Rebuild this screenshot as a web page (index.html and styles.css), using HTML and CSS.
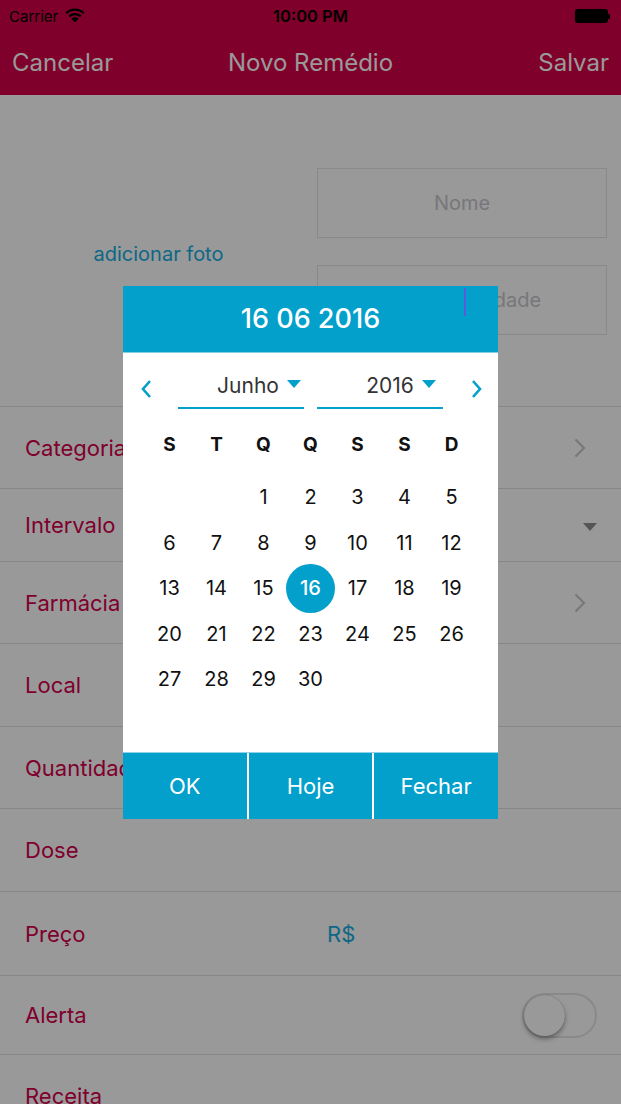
FILE: index.html
```html
<!DOCTYPE html>
<html lang="pt-BR">
<head>
<meta charset="utf-8">
<title>Novo Remédio</title>
<link rel="stylesheet" href="styles.css">
</head>
<body>
<div class="screen">
  <header class="topbar">
    <div class="statusbar">
      <div class="status-left">
        <span class="carrier">Carrier</span>
        <svg class="wifi" width="20" height="15" viewBox="0 0 20 15" aria-hidden="true">
          <path d="M10 14.6 L6.4 10.8 A5.2 5.2 0 0 1 13.6 10.8 Z" fill="#000"/>
          <path d="M4.2 8.4 A8.3 8.3 0 0 1 15.8 8.4" stroke="#000" stroke-width="2.3" fill="none"/>
          <path d="M1.2 5.3 A12.6 12.6 0 0 1 18.8 5.3" stroke="#000" stroke-width="2.3" fill="none"/>
        </svg>
      </div>
      <div class="clock">10:00 PM</div>
      <div class="battery"><span class="battery-body"></span><span class="battery-nub"></span></div>
    </div>
    <nav class="navbar">
      <span class="nav-btn nav-left">Cancelar</span>
      <span class="nav-title">Novo Remédio</span>
      <span class="nav-btn nav-right">Salvar</span>
    </nav>
  </header>

  <main class="form">
    <section class="photo-section">
      <div class="photo"><span class="photo-link">adicionar foto</span></div>
      <div class="fields">
        <div class="field">Nome</div>
        <div class="field">Data de validade<span class="text-caret"></span></div>
      </div>
    </section>
    <ul class="rows">
      <li class="row"><span class="label">Categoria</span>
        <svg class="chevron" width="12" height="20" viewBox="0 0 12 20" aria-hidden="true"><path d="M1.5 1.5 L10 10 L1.5 18.5" stroke="#c8c8cd" stroke-width="2.2" fill="none"/></svg>
      </li>
      <li class="row row-73"><span class="label">Intervalo</span><span class="drop"></span></li>
      <li class="row"><span class="label">Farmácia</span>
        <svg class="chevron" width="12" height="20" viewBox="0 0 12 20" aria-hidden="true"><path d="M1.5 1.5 L10 10 L1.5 18.5" stroke="#c8c8cd" stroke-width="2.2" fill="none"/></svg>
      </li>
      <li class="row row-83"><span class="label">Local</span></li>
      <li class="row"><span class="label">Quantidade</span></li>
      <li class="row row-83"><span class="label">Dose</span></li>
      <li class="row row-84"><span class="label">Preço</span><span class="price">R$</span></li>
      <li class="row row-79"><span class="label">Alerta</span><span class="switch"><span class="knob"></span></span></li>
      <li class="row"><span class="label">Receita</span></li>
    </ul>
  </main>

  <div class="overlay">
    <div class="dialog">
      <div class="dlg-head">16 06 2016</div>
      <div class="dlg-body">
        <div class="month-nav">
          <svg class="arrow arrow-prev" width="12" height="20" viewBox="0 0 12 20" aria-hidden="true"><path d="M10 2 L3 10 L10 18" stroke="#03a0cb" stroke-width="2.6" fill="none"/></svg>
          <div class="select sel-month"><span>Junho</span><span class="tri"></span></div>
          <div class="select sel-year"><span>2016</span><span class="tri"></span></div>
          <svg class="arrow arrow-next" width="12" height="20" viewBox="0 0 12 20" aria-hidden="true"><path d="M2 2 L9 10 L2 18" stroke="#03a0cb" stroke-width="2.6" fill="none"/></svg>
        </div>
        <div class="weekdays">
          <span>S</span><span>T</span><span>Q</span><span>Q</span><span>S</span><span>S</span><span>D</span>
        </div>
        <div class="days">
          <span></span><span></span><span>1</span><span>2</span><span>3</span><span>4</span><span>5</span>
          <span>6</span><span>7</span><span>8</span><span>9</span><span>10</span><span>11</span><span>12</span>
          <span>13</span><span>14</span><span>15</span><span class="sel"><b>16</b></span><span>17</span><span>18</span><span>19</span>
          <span>20</span><span>21</span><span>22</span><span>23</span><span>24</span><span>25</span><span>26</span>
          <span>27</span><span>28</span><span>29</span><span>30</span><span></span><span></span><span></span>
        </div>
      </div>
      <div class="dlg-buttons">
        <span class="dlg-btn">OK</span>
        <span class="dlg-btn">Hoje</span>
        <span class="dlg-btn">Fechar</span>
      </div>
    </div>
  </div>
</div>
</body>
</html>
```

FILE: styles.css
```css
* { box-sizing: border-box; }

html, body {
  margin: 0;
  padding: 0;
}

body {
  font-family: Inter, "Noto Sans", sans-serif;
  background: #fff;
  width: 621px;
  height: 1104px;
  overflow: hidden;
}

.screen {
  width: 621px;
  height: 1104px;
  overflow: hidden;
  position: relative;
  background: #fff;
}

/* ---------- top bar ---------- */
.topbar {
  background: #d40046;
  height: 95px;
  display: flex;
  flex-direction: column;
}

.statusbar {
  height: 32px;
  display: grid;
  grid-template-columns: 1fr auto 1fr;
  align-items: center;
  padding: 0 9px;
  color: #000;
}

.status-left {
  display: flex;
  align-items: center;
  gap: 7px;
}

.carrier {
  font-size: 15px;
}

.wifi { display: block; margin-top: -2px; }

.clock {
  font-size: 16.5px;
  font-weight: 600;
}

.battery {
  justify-self: end;
  display: flex;
  align-items: center;
  margin-right: 2px;
}

.battery-body {
  width: 33px;
  height: 14px;
  background: #000;
  border-radius: 3px;
}

.battery-nub {
  width: 2px;
  height: 5px;
  background: #000;
  border-radius: 0 1px 1px 0;
}

.navbar {
  flex: 1;
  display: grid;
  grid-template-columns: 1fr auto 1fr;
  align-items: center;
  padding: 0 12px 2px;
  color: #fff;
  font-size: 24px;
}

.nav-left { justify-self: start; }
.nav-right { justify-self: end; }

/* ---------- form ---------- */
.photo-section {
  display: flex;
  height: 312px;
  border-bottom: 1px solid #e2e2e2;
}

.photo {
  width: 317px;
  display: flex;
  align-items: center;
  justify-content: center;
  padding-top: 6px;
}

.photo-link {
  color: #14aee0;
  font-size: 20px;
}

.fields {
  width: 290px;
  padding-top: 73px;
  display: flex;
  flex-direction: column;
  gap: 27px;
}

.field {
  position: relative;
  height: 70px;
  border: 1.5px solid #e4e4e4;
  display: flex;
  align-items: center;
  justify-content: center;
  color: #c7c7cd;
  font-size: 20px;
  white-space: nowrap;
}

.text-caret {
  position: absolute;
  left: 146px;
  top: 22px;
  width: 2px;
  height: 28px;
  background: #5b5bdc;
  z-index: 30;
}

.rows {
  list-style: none;
  margin: 0;
  padding: 0;
}

.row {
  height: 82px;
  border-bottom: 1px solid #e2e2e2;
  display: flex;
  align-items: center;
  padding: 0 24px 0 25px;
  position: relative;
}

.row-73 { height: 73px; }
.row-83 { height: 83px; }
.row-84 { height: 84px; }
.row-79 { height: 79px; }

.label {
  color: #d4004c;
  font-size: 22px;
  flex: 1;
}

.chevron { margin-right: 11px; }

.drop {
  width: 0;
  height: 0;
  border-left: 7.5px solid transparent;
  border-right: 7.5px solid transparent;
  border-top: 8px solid #8e8e8e;
  margin-top: 3px;
}

.price {
  position: absolute;
  left: 327px;
  color: #14aee0;
  font-size: 22px;
}

.switch {
  width: 75px;
  height: 45px;
  border: 2px solid #e5e5e5;
  border-radius: 23px;
  background: #fff;
  position: relative;
  margin-top: 0;
}

.knob {
  position: absolute;
  left: 0;
  top: 0;
  width: 41px;
  height: 41px;
  border-radius: 50%;
  background: #fff;
  box-shadow: 0 3px 5px rgba(0,0,0,0.35), 0 0 1px rgba(0,0,0,0.3);
}

/* ---------- overlay + dialog ---------- */
.overlay {
  position: absolute;
  inset: 0;
  background: rgba(0,0,0,0.4);
  z-index: 10;
  display: flex;
  align-items: center;
  justify-content: center;
}

.dialog {
  width: 375px;
  background: #fff;
  display: flex;
  flex-direction: column;
}

.dlg-head {
  height: 67px;
  background: #03a0cb;
  border-bottom: 1px solid #7fd0e6;
  color: #fff;
  font-size: 27px;
  font-weight: 500;
  display: flex;
  align-items: center;
  justify-content: center;
}

.dlg-body {
  height: 399px;
  padding: 12px 23px 0;
}

.month-nav {
  display: flex;
  align-items: center;
  height: 44px;
  margin: 0 -8px 0 -6px;
}

.arrow {
  display: block;
  flex: none;
  margin-top: 5px;
}

.arrow-prev { margin-right: 26px; }
.arrow-next { margin-left: 28px; }

.select {
  width: 126px;
  height: 44px;
  border-bottom: 2px solid #03a0cb;
  display: flex;
  align-items: center;
  justify-content: center;
  gap: 8px;
  font-size: 21px;
  color: #333;
}

.sel-month { margin-right: 13px; padding-left: 36px; }
.sel-year { padding-left: 42px; }

.tri {
  width: 0;
  height: 0;
  border-left: 7.5px solid transparent;
  border-right: 7.5px solid transparent;
  border-top: 8px solid #03a0cb;
  margin-bottom: 4px;
}

.weekdays,
.days {
  display: grid;
  grid-template-columns: repeat(7, 47px);
  justify-content: center;
}

.weekdays {
  margin-top: 13px;
  height: 46px;
  align-items: center;
  font-size: 19px;
  font-weight: 700;
  color: #111;
}

.weekdays span,
.days span {
  display: flex;
  align-items: center;
  justify-content: center;
}

.days {
  margin-top: 7px;
  grid-auto-rows: 45.5px;
  font-size: 20px;
  color: #111;
}

.days .sel b {
  width: 49px;
  height: 49px;
  flex: none;
  border-radius: 50%;
  background: #03a0cb;
  color: #fff;
  font-weight: 500;
  display: flex;
  align-items: center;
  justify-content: center;
}

.dlg-buttons {
  height: 67px;
  display: grid;
  grid-template-columns: repeat(3, 1fr);
  gap: 2px;
  background: #fff;
  border-top: 1px solid #8fd3e8;
}

.dlg-btn {
  background: #03a0cb;
  color: #fff;
  font-size: 22px;
  display: flex;
  align-items: center;
  justify-content: center;
}
```
